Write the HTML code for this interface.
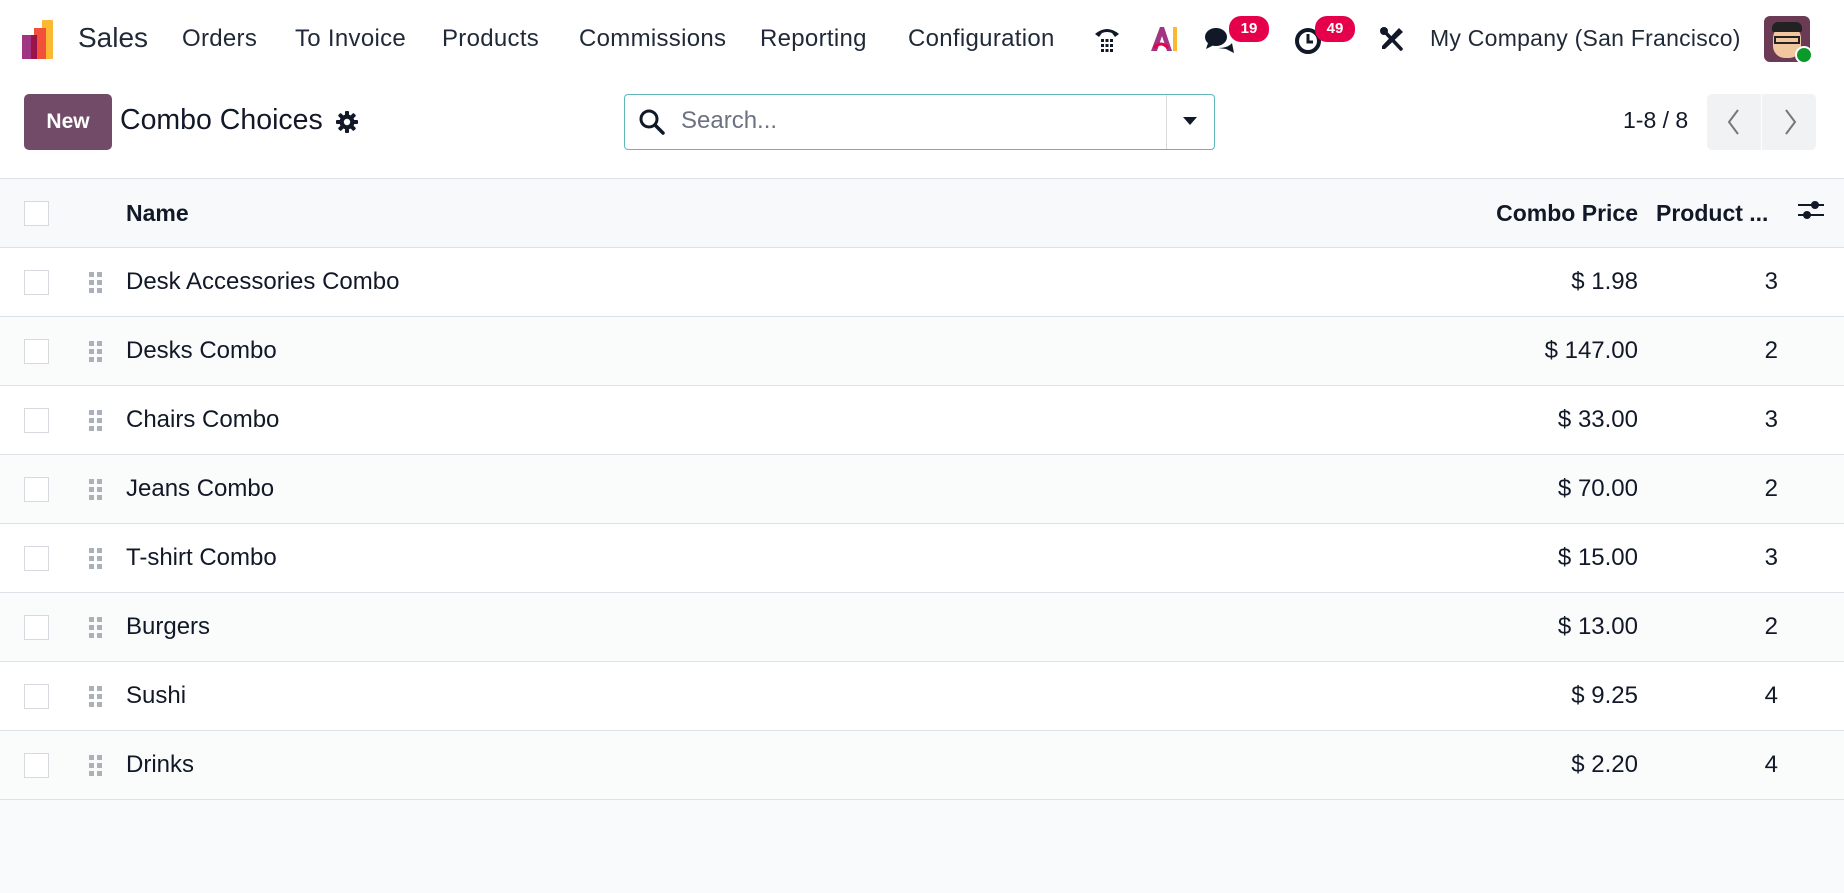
<!DOCTYPE html>
<html><head><meta charset="utf-8"><style>
*{box-sizing:border-box;margin:0;padding:0}
body{width:1844px;height:893px;background:#f9fafb;font-family:"Liberation Sans",sans-serif;color:#111827;position:relative;overflow:hidden}
.top{position:absolute;left:0;top:0;width:1844px;height:178px;background:#fff}
.a{position:absolute;white-space:nowrap}
.nav{top:25px;font-size:24px;color:#1f2937;letter-spacing:0.3px}
.badge{position:absolute;background:#e6004c;color:#fff;font-size:15px;font-weight:bold;border-radius:12px;height:26px;line-height:26px;text-align:center;width:40px;top:16px}
table{position:absolute;left:0;top:178px;width:1844px;border-collapse:collapse;background:#fff}
td,th{height:69px;border-top:1px solid #dee2e6;font-size:24px;vertical-align:middle}
tr:last-child td{border-bottom:1px solid #dee2e6}
th{background:#f8f9fa;font-weight:bold;text-align:left;font-size:23px}
tbody tr:nth-child(even) td{background:#fafbfb}
.cb{width:25px;height:25px;border:1px solid #d6d9dd;background:#fff;margin-left:24px}
.r{text-align:right}
.h{display:grid;grid-template-columns:repeat(2,5px);gap:3px;margin-left:89px;width:16px}
.h i{display:block;width:5px;height:5px;background:#aab1b9}
</style></head><body>
<div class="top"></div>
<svg class="a" style="left:22px;top:20px" width="40" height="40" viewBox="0 0 40 40"><rect x="20" y="0" width="11" height="39" fill="#fbb933" rx="1"/><rect x="12" y="8" width="12" height="31" fill="#f2503b"/><rect x="0" y="15" width="12" height="24" fill="#a23581"/><rect x="9" y="15" width="6" height="24" fill="#9a1449"/></svg>
<div class="a" style="left:78px;top:22px;font-size:28px;color:#1f2937">Sales</div>
<div class="a nav" style="left:182px">Orders</div>
<div class="a nav" style="left:295px">To Invoice</div>
<div class="a nav" style="left:442px">Products</div>
<div class="a nav" style="left:579px">Commissions</div>
<div class="a nav" style="left:760px">Reporting</div>
<div class="a nav" style="left:908px">Configuration</div>
<svg class="a" style="left:1093px;top:24px" width="28" height="30" viewBox="0 0 28 30"><path d="M2 10 Q14 0 26 10 L22 13 L19 9 Q14 7 9 9 L6 13Z" fill="#111827"/><g fill="#111827"><rect x="8" y="15" width="3" height="3"/><rect x="12.5" y="15" width="3" height="3"/><rect x="17" y="15" width="3" height="3"/><rect x="8" y="20" width="3" height="3"/><rect x="12.5" y="20" width="3" height="3"/><rect x="17" y="20" width="3" height="3"/><rect x="8" y="25" width="3" height="3"/><rect x="12.5" y="25" width="3" height="3"/><rect x="17" y="25" width="3" height="3"/></g></svg>
<svg class="a" style="left:1150px;top:26px" width="30" height="26" viewBox="0 0 30 26"><path d="M1 25 L10 1 L14 1 L22 25 L17 25 L12 10 L7 25Z" fill="#a23581"/><path d="M4 22 Q11 14 18 22" stroke="#e6004c" stroke-width="3" fill="none"/><rect x="23" y="1" width="4" height="24" fill="#fbb933"/></svg>
<svg class="a" style="left:1204px;top:26px" width="32" height="30" viewBox="0 0 32 30"><ellipse cx="12" cy="11" rx="11" ry="9" fill="#111827"/><path d="M4 17 L2 23 L10 19Z" fill="#111827"/><path d="M14 22 Q24 22 28 17 L30 27 L22 23Z" fill="#111827"/></svg>
<div class="badge" style="left:1229px">19</div>
<svg class="a" style="left:1294px;top:24px" width="30" height="32" viewBox="0 0 30 32"><circle cx="14" cy="17" r="11" fill="none" stroke="#111827" stroke-width="4"/><path d="M14 10 V18 H19" stroke="#111827" stroke-width="3" fill="none"/></svg>
<div class="badge" style="left:1315px">49</div>
<svg class="a" style="left:1379px;top:26px" width="26" height="26" viewBox="0 0 26 26"><path d="M6 6 L22 23" stroke="#111827" stroke-width="3.5" stroke-linecap="round"/><path d="M20 2 L24 6 L6 23 L3 23 L3 20Z" fill="#111827"/><circle cx="5" cy="5" r="4" fill="#111827"/></svg>
<div class="a nav" style="left:1430px;font-size:23px;letter-spacing:0.25px">My Company (San Francisco)</div>
<div class="a" style="left:1764px;top:16px;width:46px;height:46px;border-radius:6px;background:#6b3a55;overflow:hidden"><div style="position:absolute;left:9px;top:10px;width:28px;height:32px;border-radius:12px;background:#f2c7a0"></div><div style="position:absolute;left:8px;top:6px;width:30px;height:10px;background:#222;border-radius:6px 6px 2px 2px"></div><div style="position:absolute;left:10px;top:20px;width:26px;height:8px;border:2px solid #222"></div></div>
<div class="a" style="left:1795px;top:46px;width:18px;height:18px;border-radius:50%;background:#0a9a2a;border:2px solid #fff"></div>

<div class="a" style="left:24px;top:94px;width:88px;height:56px;background:#714b67;border-radius:5px;color:#fff;font-weight:bold;font-size:21px;text-align:center;line-height:56px">New</div>
<div class="a" style="left:120px;top:104px;font-size:28.5px;color:#111827">Combo Choices</div>
<svg class="a" style="left:336px;top:111px" width="22" height="22" viewBox="0 0 22 22"><g fill="#111827"><circle cx="11" cy="11" r="7.5"/><rect x="9" y="0" width="4" height="22" rx="1"/><rect x="0" y="9" width="22" height="4" rx="1"/><rect x="9" y="0" width="4" height="22" rx="1" transform="rotate(45 11 11)"/><rect x="9" y="0" width="4" height="22" rx="1" transform="rotate(-45 11 11)"/></g><circle cx="11" cy="11" r="3.2" fill="#fff"/></svg>
<div class="a" style="left:624px;top:94px;width:591px;height:56px;border:1px solid #5fb7ba;border-radius:4px;background:#fff"></div>
<svg class="a" style="left:639px;top:109px" width="26" height="26" viewBox="0 0 26 26"><circle cx="10" cy="10" r="8" stroke="#111827" stroke-width="3" fill="none"/><path d="M16 16 L24 24" stroke="#111827" stroke-width="3.5" stroke-linecap="round"/></svg>
<div class="a" style="left:681px;top:107px;font-size:24px;color:#6b7280">Search...</div>
<div class="a" style="left:1166px;top:95px;width:1px;height:54px;background:#d8dadd"></div>
<div class="a" style="left:1183px;top:117px;width:0;height:0;border-left:7px solid transparent;border-right:7px solid transparent;border-top:8px solid #111827"></div>
<div class="a" style="left:1623px;top:107px;font-size:23px;color:#111827">1-8 / 8</div>
<div class="a" style="left:1707px;top:94px;width:54px;height:56px;background:#f1f2f4;border-radius:5px 0 0 5px"></div>
<div class="a" style="left:1762px;top:94px;width:54px;height:56px;background:#f1f2f4;border-radius:0 5px 5px 0"></div>
<svg class="a" style="left:1724px;top:108px" width="20" height="28"><path d="M14 2 L5 14 L14 26" stroke="#777" stroke-width="2" fill="none"/></svg>
<svg class="a" style="left:1780px;top:108px" width="20" height="28"><path d="M6 2 L15 14 L6 26" stroke="#777" stroke-width="2" fill="none"/></svg>

<table>
<thead><tr><th style="width:126px"><div class="cb"></div></th><th>Name</th><th class="r" style="width:220px;padding-right:0">Combo Price</th><th style="width:140px;padding-left:18px">Product ...</th><th style="width:66px"><svg width="26" height="24" viewBox="0 0 26 24" style="margin-left:20px"><path d="M0 7 H26 M0 17 H26" stroke="#111827" stroke-width="2"/><circle cx="17" cy="7" r="4" fill="#111827"/><circle cx="9" cy="17" r="4" fill="#111827"/></svg></th></tr></thead>
<tbody>
<tr><td><div style="display:flex;align-items:center"><div class="cb"></div><div class="h" style="margin-left:40px"><i></i><i></i><i></i><i></i><i></i><i></i></div></div></td><td>Desk Accessories Combo</td><td class="r">$ 1.98</td><td class="r">3</td><td></td></tr>
<tr><td><div style="display:flex;align-items:center"><div class="cb"></div><div class="h" style="margin-left:40px"><i></i><i></i><i></i><i></i><i></i><i></i></div></div></td><td>Desks Combo</td><td class="r">$ 147.00</td><td class="r">2</td><td></td></tr>
<tr><td><div style="display:flex;align-items:center"><div class="cb"></div><div class="h" style="margin-left:40px"><i></i><i></i><i></i><i></i><i></i><i></i></div></div></td><td>Chairs Combo</td><td class="r">$ 33.00</td><td class="r">3</td><td></td></tr>
<tr><td><div style="display:flex;align-items:center"><div class="cb"></div><div class="h" style="margin-left:40px"><i></i><i></i><i></i><i></i><i></i><i></i></div></div></td><td>Jeans Combo</td><td class="r">$ 70.00</td><td class="r">2</td><td></td></tr>
<tr><td><div style="display:flex;align-items:center"><div class="cb"></div><div class="h" style="margin-left:40px"><i></i><i></i><i></i><i></i><i></i><i></i></div></div></td><td>T-shirt Combo</td><td class="r">$ 15.00</td><td class="r">3</td><td></td></tr>
<tr><td><div style="display:flex;align-items:center"><div class="cb"></div><div class="h" style="margin-left:40px"><i></i><i></i><i></i><i></i><i></i><i></i></div></div></td><td>Burgers</td><td class="r">$ 13.00</td><td class="r">2</td><td></td></tr>
<tr><td><div style="display:flex;align-items:center"><div class="cb"></div><div class="h" style="margin-left:40px"><i></i><i></i><i></i><i></i><i></i><i></i></div></div></td><td>Sushi</td><td class="r">$ 9.25</td><td class="r">4</td><td></td></tr>
<tr><td><div style="display:flex;align-items:center"><div class="cb"></div><div class="h" style="margin-left:40px"><i></i><i></i><i></i><i></i><i></i><i></i></div></div></td><td>Drinks</td><td class="r">$ 2.20</td><td class="r">4</td><td></td></tr>
</tbody></table>
</body></html>
